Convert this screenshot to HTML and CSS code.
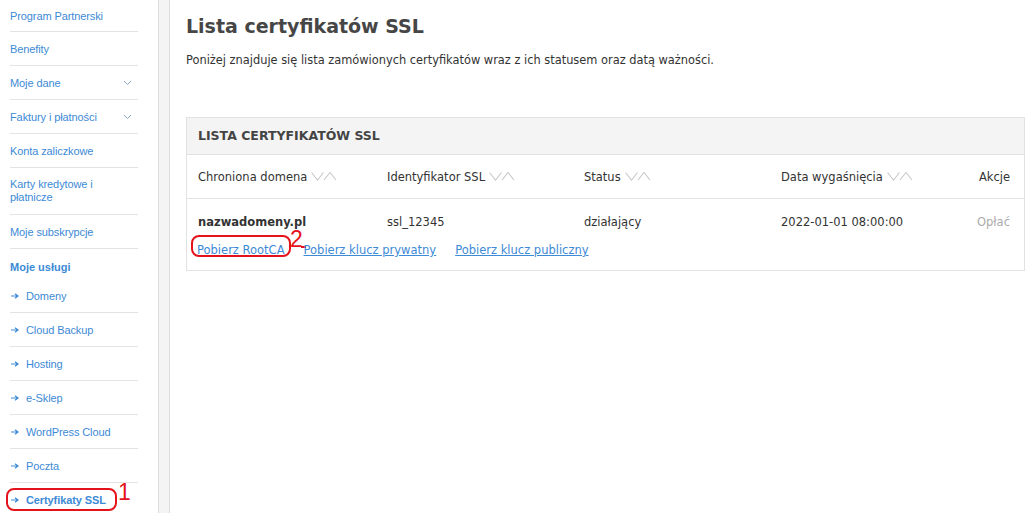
FILE: index.html
```html
<!DOCTYPE html>
<html lang="pl">
<head>
<meta charset="utf-8">
<title>Lista certyfikatów SSL</title>
<link rel="stylesheet" href="styles.css">
</head>
<body>
<div class="page">
  <nav class="sidebar">
    <ul class="menu">
      <li class="item first"><a>Program Partnerski</a></li>
      <li class="item"><a>Benefity</a></li>
      <li class="item"><a>Moje dane</a><svg class="chev" width="9" height="6" viewBox="0 0 9 6"><polyline points="1,1 4.5,4.5 8,1" fill="none" stroke="#8aa7c9" stroke-width="1"/></svg></li>
      <li class="item"><a>Faktury i płatności</a><svg class="chev" width="9" height="6" viewBox="0 0 9 6"><polyline points="1,1 4.5,4.5 8,1" fill="none" stroke="#8aa7c9" stroke-width="1"/></svg></li>
      <li class="item"><a>Konta zaliczkowe</a></li>
      <li class="item tall"><a>Karty kredytowe i<br>płatnicze</a></li>
      <li class="item"><a>Moje subskrypcje</a></li>
      <li class="section">Moje usługi</li>
      <li class="item sub"><svg class="arrow" width="8" height="6" viewBox="0 0 8 6"><path d="M0,3 H6.5 M4,0.8 L7,3 L4,5.2" fill="none" stroke="#3d8ad6" stroke-width="1.2"/></svg><a>Domeny</a></li>
      <li class="item sub"><svg class="arrow" width="8" height="6" viewBox="0 0 8 6"><path d="M0,3 H6.5 M4,0.8 L7,3 L4,5.2" fill="none" stroke="#3d8ad6" stroke-width="1.2"/></svg><a>Cloud Backup</a></li>
      <li class="item sub"><svg class="arrow" width="8" height="6" viewBox="0 0 8 6"><path d="M0,3 H6.5 M4,0.8 L7,3 L4,5.2" fill="none" stroke="#3d8ad6" stroke-width="1.2"/></svg><a>Hosting</a></li>
      <li class="item sub"><svg class="arrow" width="8" height="6" viewBox="0 0 8 6"><path d="M0,3 H6.5 M4,0.8 L7,3 L4,5.2" fill="none" stroke="#3d8ad6" stroke-width="1.2"/></svg><a>e-Sklep</a></li>
      <li class="item sub"><svg class="arrow" width="8" height="6" viewBox="0 0 8 6"><path d="M0,3 H6.5 M4,0.8 L7,3 L4,5.2" fill="none" stroke="#3d8ad6" stroke-width="1.2"/></svg><a>WordPress Cloud</a></li>
      <li class="item sub"><svg class="arrow" width="8" height="6" viewBox="0 0 8 6"><path d="M0,3 H6.5 M4,0.8 L7,3 L4,5.2" fill="none" stroke="#3d8ad6" stroke-width="1.2"/></svg><a>Poczta</a></li>
      <li class="item sub active"><svg class="arrow" width="8" height="6" viewBox="0 0 8 6"><path d="M0,3 H6.5 M4,0.8 L7,3 L4,5.2" fill="none" stroke="#3d8ad6" stroke-width="1.2"/></svg><a>Certyfikaty SSL</a><span class="annot annot-1"></span><span class="annot-num num-1">1</span></li>
    </ul>
  </nav>
  <div class="gutter"></div>
  <main class="main">
    <h1 class="title">Lista certyfikatów SSL</h1>
    <p class="lead">Poniżej znajduje się lista zamówionych certyfikatów wraz z ich statusem oraz datą ważności.</p>
    <section class="panel">
      <div class="panel-head">LISTA CERTYFIKATÓW SSL</div>
      <div class="row head-row">
        <div class="cell">Chroniona domena<svg class="sort" width="26" height="9" viewBox="0 0 26 9"><polyline points="0.5,0.5 6.5,8 12.5,0.5" fill="none" stroke="#c9c9c9" stroke-width="1.1"/><polyline points="13,8 19,0.5 25,8" fill="none" stroke="#c9c9c9" stroke-width="1.1"/></svg></div>
        <div class="cell">Identyfikator SSL<svg class="sort" width="26" height="9" viewBox="0 0 26 9"><polyline points="0.5,0.5 6.5,8 12.5,0.5" fill="none" stroke="#c9c9c9" stroke-width="1.1"/><polyline points="13,8 19,0.5 25,8" fill="none" stroke="#c9c9c9" stroke-width="1.1"/></svg></div>
        <div class="cell">Status<svg class="sort" width="26" height="9" viewBox="0 0 26 9"><polyline points="0.5,0.5 6.5,8 12.5,0.5" fill="none" stroke="#c9c9c9" stroke-width="1.1"/><polyline points="13,8 19,0.5 25,8" fill="none" stroke="#c9c9c9" stroke-width="1.1"/></svg></div>
        <div class="cell">Data wygaśnięcia<svg class="sort" width="26" height="9" viewBox="0 0 26 9"><polyline points="0.5,0.5 6.5,8 12.5,0.5" fill="none" stroke="#c9c9c9" stroke-width="1.1"/><polyline points="13,8 19,0.5 25,8" fill="none" stroke="#c9c9c9" stroke-width="1.1"/></svg></div>
        <div class="cell right">Akcje</div>
      </div>
      <div class="data">
        <div class="row data-row">
          <div class="cell strong">nazwadomeny.pl</div>
          <div class="cell">ssl_12345</div>
          <div class="cell">działający</div>
          <div class="cell">2022-01-01 08:00:00</div>
          <div class="cell right muted">Opłać</div>
        </div>
        <div class="links">
          <a class="dl first-link">Pobierz RootCA<span class="annot annot-2"></span><span class="annot-num num-2">2</span><span class="annot-tail"></span></a>
          <a class="dl">Pobierz klucz prywatny</a>
          <a class="dl">Pobierz klucz publiczny</a>
        </div>
      </div>
    </section>
  </main>
</div>
</body>
</html>
```

FILE: styles.css
```css
html, body {
  margin: 0;
  padding: 0;
  background: #fff;
}
.page {
  display: grid;
  grid-template-columns: 158px 12px 1fr;
  height: 513px;
  overflow: hidden;
}
.sidebar {
  padding: 0 20px 0 10px;
  font-family: "Liberation Sans", Arial, sans-serif;
  font-size: 11px;
  color: #3d8ad6;
}
.menu {
  list-style: none;
  margin: 0;
  padding: 0;
}
.item {
  position: relative;
  display: flex;
  align-items: center;
  justify-content: space-between;
  height: 33px;
  border-bottom: 1px solid #e3e3e3;
  letter-spacing: -0.1px;
}
.item.first { height: 31px; }
.item.tall {
  height: 46px;
  line-height: 13px;
}
.item a { color: #3d8ad6; text-decoration: none; }
.chev { margin-right: 6px; }
.section {
  height: 24px;
  line-height: 24px;
  padding-top: 6px;
  font-weight: bold;
  color: #3d8ad6;
}
.item.sub {
  justify-content: flex-start;
}
.item.sub.active { border-bottom: none; }
.arrow {
  margin-left: 1px;
  margin-right: 7px;
  flex: none;
}
.active a { font-weight: bold; }
.annot {
  position: absolute;
  border: 2px solid #e4131b;
  border-radius: 8px;
  pointer-events: none;
}
.annot-1 {
  left: -4px;
  top: 5px;
  width: 107px;
  height: 19px;
}
.annot-num {
  position: absolute;
  color: #e4131b;
  font-family: "Liberation Sans", Arial, sans-serif;
  font-size: 23px;
  line-height: 23px;
  font-weight: normal;
  text-decoration: none;
}
.num-1 { left: 108px; top: -2px; }
.gutter {
  background: #f4f4f4;
  border-left: 1px solid #dcdcdc;
  border-right: 1px solid #dcdcdc;
}
.main {
  padding: 0 5px 0 16px;
  font-family: "DejaVu Sans", Verdana, sans-serif;
  color: #333;
  font-size: 12px;
}
.title {
  margin: 14px 0 0;
  font-size: 19px;
  line-height: 24px;
  font-weight: bold;
  color: #464646;
}
.lead {
  margin: 14px 0 0;
  line-height: 16px;
  font-size: 11.4px;
  color: #333;
}
.panel {
  margin-top: 49px;
  border: 1px solid #e2e2e2;
}
.panel-head {
  background: #f4f4f4;
  border-bottom: 1px solid #e2e2e2;
  height: 36px;
  line-height: 36px;
  padding-left: 11px;
  font-weight: bold;
  font-size: 12.5px;
  color: #444;
}
.row {
  display: grid;
  grid-template-columns: 189px 197px 197px 1fr auto;
  padding: 0 14px 0 11px;
  align-items: center;
}
.head-row {
  height: 43px;
  border-bottom: 1px solid #e2e2e2;
  font-size: 11.5px;
}
.cell { display: flex; align-items: center; white-space: nowrap; }
.sort { margin-left: 4px; margin-top: -1px; }
.right { justify-content: flex-end; }
.data-row {
  height: 45px;
  font-size: 11.5px;
}
.strong { font-weight: bold; color: #333; }
.muted { color: #aaa; }
.links {
  display: flex;
  gap: 19px;
  margin-top: -2px;
  padding: 0 0 12px 10px;
  font-size: 11.5px;
  line-height: 16px;
}
.dl {
  color: #3d8ad6;
  text-decoration: underline;
  position: relative;
}
.annot-2 {
  left: -6px;
  top: -7px;
  width: 96px;
  height: 18px;
}
.num-2 {
  left: 93px;
  top: -14px;
}
.annot-tail {
  position: absolute;
  left: 104px;
  top: 4px;
  width: 5px;
  height: 2px;
  background: #e4131b;
}
```
